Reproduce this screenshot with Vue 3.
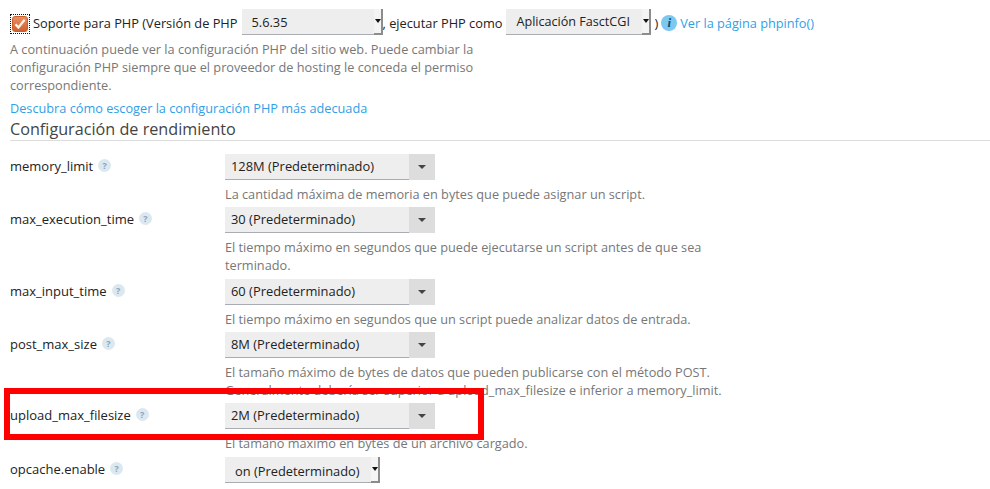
<template>
  <div class="page">
    <div class="php-row">
      <span class="check-wrap">
        <span class="check">
          <svg width="16" height="16" viewBox="0 0 16 16">
            <path d="M3.4 8.2l3 3.2L12.6 3.8" fill="none" stroke="#fbeee6" stroke-width="2.4" />
          </svg>
        </span>
      </span>
      <span class="php-label">Soporte para PHP (Versión de PHP</span>
      <span class="native version"><span class="native-text">5.6.35</span><span class="native-arrow"></span></span>
      <span class="php-after">, ejecutar PHP como</span>
      <span class="native handler"><span class="native-text">Aplicación FasctCGI</span><span class="native-arrow"></span></span>
      <span class="paren">)</span>
      <span class="info"><i>i</i></span>
      <a class="link info-link">Ver la página phpinfo()</a>
    </div>

    <p class="intro">
      A continuación puede ver la configuración PHP del sitio web. Puede cambiar la
      configuración PHP siempre que el proveedor de hosting le conceda el permiso
      correspondiente.
    </p>
    <a class="link choose">Descubra cómo escoger la configuración PHP más adecuada</a>

    <h3 class="section">Configuración de rendimiento</h3>

    <div class="form">
      <div v-for="opt in options" :key="opt.name" class="row">
        <div class="name">
          <span>{{ opt.name }}</span>
          <span class="hint">?</span>
        </div>
        <div class="control">
          <div v-if="!opt.native" class="select">
            <span class="select-text">{{ opt.value }}</span>
            <span class="select-btn"><span class="caret"></span></span>
          </div>
          <span v-else class="native on"><span class="native-text">{{ opt.value }}</span><span class="native-arrow"></span></span>
          <div v-if="opt.desc" class="desc">{{ opt.desc }}</div>
        </div>
      </div>
    </div>

    <div class="highlight"></div>
  </div>
</template>

<script setup>
const options = [
  { name: 'memory_limit', value: '128M (Predeterminado)', desc: 'La cantidad máxima de memoria en bytes que puede asignar un script.' },
  { name: 'max_execution_time', value: '30 (Predeterminado)', desc: 'El tiempo máximo en segundos que puede ejecutarse un script antes de que sea terminado.' },
  { name: 'max_input_time', value: '60 (Predeterminado)', desc: 'El tiempo máximo en segundos que un script puede analizar datos de entrada.' },
  { name: 'post_max_size', value: '8M (Predeterminado)', desc: 'El tamaño máximo de bytes de datos que pueden publicarse con el método POST. Generalmente debería ser superior a upload_max_filesize e inferior a memory_limit.' },
  { name: 'upload_max_filesize', value: '2M (Predeterminado)', desc: 'El tamaño máximo en bytes de un archivo cargado.' },
  { name: 'opcache.enable', value: 'on (Predeterminado)', native: true },
]
</script>

<style>
html, body { background: #fff; overflow: hidden; }
</style>

<style scoped>
* { box-sizing: border-box; margin: 0; padding: 0; }

.page {
  position: relative;
  width: 990px;
  height: 489px;
  overflow: hidden;
  padding: 9px 0 0 10px;
  font-family: 'Open Sans', sans-serif;
  font-size: 13px;
  line-height: 18.2px;
  color: #222;
  background: #fff;
}

.php-row {
  display: flex;
  align-items: center;
  height: 25px;
  font-size: 12.8px;
  white-space: nowrap;
}

.check-wrap {
  width: 20px;
  height: 20px;
  margin-top: 4px;
  border: 1px dotted #111;
  padding: 1px;
  flex-shrink: 0;
}

.check {
  display: block;
  width: 16px;
  height: 16px;
  border-radius: 3px;
  border: 1px solid #c9602f;
  background: linear-gradient(#ea8f62, #d0602d);
  overflow: hidden;
}

.check svg { display: block; margin: -1px 0 0 -1px; }

.php-label { margin: 3px 0 0 3px; }
.php-after { margin-top: 3px; }

.native {
  display: flex;
  align-items: stretch;
  height: 26px;
  background: #eee;
  border-bottom: 1px solid #a9acb2;
  flex-shrink: 0;
}

.native-text {
  flex: 1;
  padding: 2px 0 0 10px;
  line-height: 22px;
}

.native-arrow {
  position: relative;
  width: 9px;
  background: #f4f4f4;
  border-right: 2px solid #8c8c8c;
  border-bottom: 2px solid #8c8c8c;
  margin-bottom: -1px;
}

.native-arrow::after {
  content: '';
  position: absolute;
  left: 1px;
  top: 10px;
  border: 3px solid transparent;
  border-top: 4px solid #111;
  border-bottom: 0;
}

.version { width: 141px; margin-left: 4px; }
.handler { width: 145px; margin-left: 4px; font-size: 12.6px; }
.on { width: 155px; font-size: 12.85px; }
.on .native-text { line-height: 24px; padding-top: 2px; }

.paren { margin: 3px 0 0 3px; }

.info {
  display: flex;
  align-items: center;
  justify-content: center;
  width: 16px;
  height: 16px;
  margin: 3px 0 0 3px;
  border-radius: 50%;
  background: #7cc8ee;
}

.info i {
  font-family: 'Liberation Serif', serif;
  font-size: 13px;
  font-weight: 700;
  color: #0f4c6b;
  line-height: 16px;
}

.link { color: #2f9fe8; font-size: 12.72px; }
.info-link { margin: 3px 0 0 3px; }

.intro {
  width: 470px;
  margin-top: 5.6px;
  font-size: 12.72px;
  color: #777;
}

.choose {
  display: block;
  margin-top: 4.6px;
}

.section {
  margin-top: 2px;
  height: 22px;
  border-bottom: 1px solid #ddd;
  font-size: 16.2px;
  font-weight: 400;
  line-height: 20px;
  color: #444;
}

.form { margin-top: 12.8px; }

.row {
  display: flex;
  padding-bottom: 4.1px;
}

.name {
  display: flex;
  align-items: flex-start;
  width: 215px;
  flex-shrink: 0;
  height: 26px;
  padding-top: 3px;
}

.hint {
  width: 13px;
  height: 13px;
  margin: 2px 0 0 5px;
  border-radius: 50%;
  background: #dce8f0;
  color: #8aa5b8;
  font-size: 9px;
  font-weight: 700;
  line-height: 13px;
  text-align: center;
}

.control { width: 510px; }

.select {
  display: flex;
  width: 210px;
  height: 26px;
  font-size: 12.9px;
}

.select-text {
  flex: 1;
  padding: 3px 0 0 6px;
  background: #eee;
  border-bottom: 1px solid #a9acb2;
}

.select-btn {
  display: flex;
  align-items: center;
  justify-content: center;
  width: 26px;
  background: #ddd;
}

.caret {
  border: 4px solid transparent;
  border-top: 4px solid #444;
  border-bottom: 0;
}

.desc {
  margin-top: 5px;
  font-size: 12.72px;
  color: #777;
}

.highlight {
  position: absolute;
  left: 4px;
  top: 388px;
  width: 480px;
  height: 52px;
  border: 6px solid #f00;
  pointer-events: none;
}
</style>
